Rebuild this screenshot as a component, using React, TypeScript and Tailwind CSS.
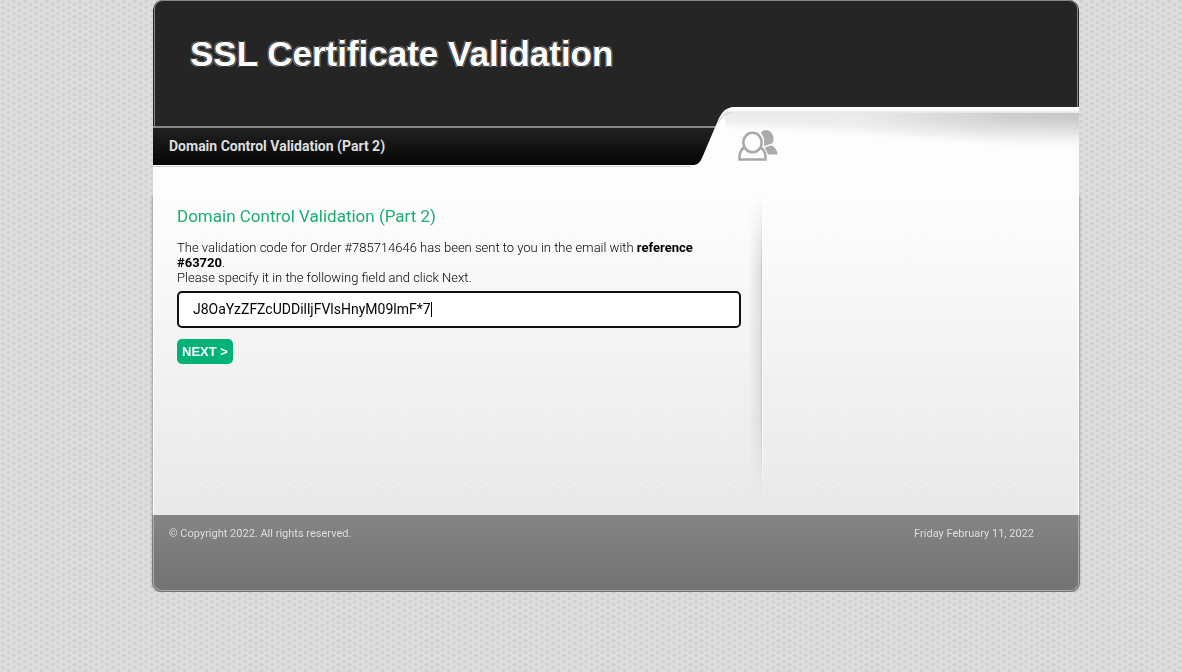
import React from "react";

function PeopleIcon() {
  return (
    <svg width="40" height="32" viewBox="0 0 40 32" aria-hidden="true">
      <g fill="#ababab">
        <ellipse cx="28" cy="9" rx="7.6" ry="9" />
        <path d="M27 18.500 L33 15 Q39 18 39.8 24.5 H30 Z" />
      </g>
      <path d="M24 17.500 L35 14" stroke="#fdfdfd" strokeWidth="1.500" />
      <g stroke="#fdfdfd" strokeWidth="5.500" fill="#fdfdfd">
        <path d="M1.500 30 Q0.500 20 7.500 17 H21 Q27.500 20 27 30 Z" />
        <ellipse cx="14.500" cy="12" rx="9" ry="10" />
      </g>
      <path
        d="M1.500 29.500 V26 Q2 19 7.500 17 H21 Q27 19 27.500 26 V29.500 Z"
        fill="#fdfdfd"
        stroke="#a8a8a8"
        strokeWidth="2.600"
      />
      <ellipse cx="14.500" cy="12.500" rx="9.200" ry="9.800" fill="#fdfdfd" stroke="#a8a8a8" strokeWidth="2.600" />
    </svg>
  );
}

function TabShape() {
  return (
    <svg className="absolute right-0 bottom-0" width="388" height="60" viewBox="0 0 388 60" aria-hidden="true">
      <defs>
        <linearGradient id="lip" x1="0" y1="0" x2="0" y2="1">
          <stop offset="0" stopColor="#fff" />
          <stop offset="0.5" stopColor="#fafafa" />
          <stop offset="1" stopColor="#e4e4e4" />
        </linearGradient>
        <linearGradient id="shade" x1="0" y1="0" x2="0" y2="1">
          <stop offset="0" stopColor="#c2c2c2" />
          <stop offset="0.35" stopColor="#c8c8c8" stopOpacity="0.95" />
          <stop offset="0.65" stopColor="#dadada" stopOpacity="0.6" />
          <stop offset="1" stopColor="#fdfdfd" stopOpacity="0" />
        </linearGradient>
        <linearGradient id="fade" x1="0" y1="0" x2="1" y2="0">
          <stop offset="0" stopColor="#fff" stopOpacity="0.3" />
          <stop offset="0.4" stopColor="#fff" stopOpacity="0.35" />
          <stop offset="0.8" stopColor="#fff" stopOpacity="0.9" />
          <stop offset="1" stopColor="#fff" />
        </linearGradient>
        <mask id="shadeMask">
          <rect x="24" y="0" width="364" height="60" fill="url(#fade)" />
        </mask>
        <filter id="soft" x="-5%" y="-20%" width="110%" height="150%">
          <feGaussianBlur stdDeviation="0 3" />
        </filter>
        <clipPath id="belowLip">
          <rect x="32" y="8" width="356" height="52" />
        </clipPath>
      </defs>
      <path d="M3 60 Q8 60 11 53 L28 13 Q33 2 44 2 H388 V60 Z" fill="#fdfdfd" />
      <path d="M32 8 Q36 2 44 2 H388 V8 Z" fill="url(#lip)" />
      <g clipPath="url(#belowLip)">
        <g mask="url(#shadeMask)">
          <path d="M34 0 H400 V46 C300 36 180 26 34 20 Z" fill="url(#shade)" filter="url(#soft)" />
        </g>
      </g>
      <path d="M27 18 L30 13 Q34 8 41 8" fill="none" stroke="#dcdcdc" strokeWidth="1.500" />
    </svg>
  );
}

function Backdrop() {
  return (
    <svg className="fixed inset-0 -z-10 h-full w-full" aria-hidden="true">
      <defs>
        <pattern id="dots" width="11" height="6" patternUnits="userSpaceOnUse">
          <rect width="11" height="6" fill="#dddddd" />
          <ellipse cx="3" cy="1.500" rx="1.800" ry="1.300" fill="#cecece" />
          <ellipse cx="8.500" cy="4.500" rx="1.800" ry="1.300" fill="#cecece" />
        </pattern>
      </defs>
      <rect width="100%" height="100%" fill="url(#dots)" />
    </svg>
  );
}

export default function App() {
  const [code, setCode] = React.useState("J8OaYzZFZcUDDilljFVlsHnyM09lmF*7");
  return (
    <div className="isolate mx-auto max-w-[976px] pl-[50px] font-['Roboto',sans-serif]">
      <Backdrop />
      <header className="relative">
        <div className="rounded-t-[10px] bg-[#252525]">
          <div className="mx-px h-[126px] rounded-t-[9px] border border-b-0 border-[#868686] px-[35px] pt-8">
            <h1 className="font-['Liberation_Sans',sans-serif] text-[35px] leading-[42px] font-bold text-white opacity-99 [text-shadow:1px_0_#333,-1px_0_#333,0_1px_#333,0_-1px_#333,1px_1px_#999,-1px_1px_#999,1px_-1px_#999,-1px_-1px_#999]">
              SSL Certificate Validation
            </h1>
          </div>
        </div>
        <div className="border-t-2 border-[#868686] bg-linear-to-b from-[#222] to-[#060606] px-4 py-2 text-sm leading-[21px] font-bold text-[#dedede]">
          Domain Control Validation (Part 2)
        </div>
        <TabShape />
        <div className="absolute right-[301px] bottom-[3px]">
          <PeopleIcon />
        </div>
      </header>

      <div className="relative h-[30px] bg-[#fdfdfd] pt-px">
        <div className="mr-[388px] h-px bg-[#cdcdcd]" />
      </div>
      <div className="rounded-b-[10px] shadow-[0_1px_3px_#666]">
        <div className="flex border-x border-white bg-linear-to-b from-[#fdfdfd] to-[#ebebeb]/85 pb-[15px]">
          <main className="min-h-[305px] min-w-0 flex-1 pt-[9px] pr-[7px] pl-[23px]">
            <h2 className="text-[17px] leading-6 text-[#1bad72]">Domain Control Validation (Part 2)</h2>
            <form onSubmit={(e) => e.preventDefault()}>
              <label htmlFor="code" className="mt-3 block pr-10 text-[13px] leading-[15px] font-light text-black">
                The validation code for Order #785714646 has been sent to you in the email with{" "}
                <b className="font-bold">reference</b> <b className="font-bold">#63720</b>.
                <br />
                Please specify it in the following field and click Next.
              </label>
              <div className="relative mt-[6px]">
                <input
                  id="code"
                  value={code}
                  onChange={(e) => setCode(e.target.value)}
                  className="block h-[37px] w-full rounded-[5px] border-2 border-[#101010] bg-white px-[14px] pb-px text-sm text-black outline-none"
                />
                <span className="absolute top-[11px] left-[254px] h-[15px] w-px bg-black" />
              </div>
              <button className="mt-[11px] block h-[25px] rounded-[5px] bg-[#00b274] px-[5px] font-['Liberation_Sans',sans-serif] text-[13px] font-bold text-white">
                NEXT &gt;
              </button>
            </form>
          </main>
          <aside className="flex w-[330px] shrink-0">
            <div className="h-[305px] w-[14px] border-r border-[#c8c8c8] bg-linear-to-r from-transparent to-[#ddd] mask-y-from-75%" />
            <div className="h-[305px] w-px bg-white mask-y-from-75%" />
          </aside>
        </div>
        <footer className="-mx-px rounded-b-[10px] bg-linear-to-b from-[#858585] to-[#737171] px-px pb-px">
          <div className="flex h-[76px] justify-between rounded-b-[9px] border border-t-0 border-[#aaa] pt-[11px] pr-11 pl-[15px] text-[11px] leading-[15px] text-[#dedede]">
            <p>© Copyright 2022. All rights reserved.</p>
            <p>Friday February 11, 2022</p>
          </div>
        </footer>
      </div>
    </div>
  );
}
